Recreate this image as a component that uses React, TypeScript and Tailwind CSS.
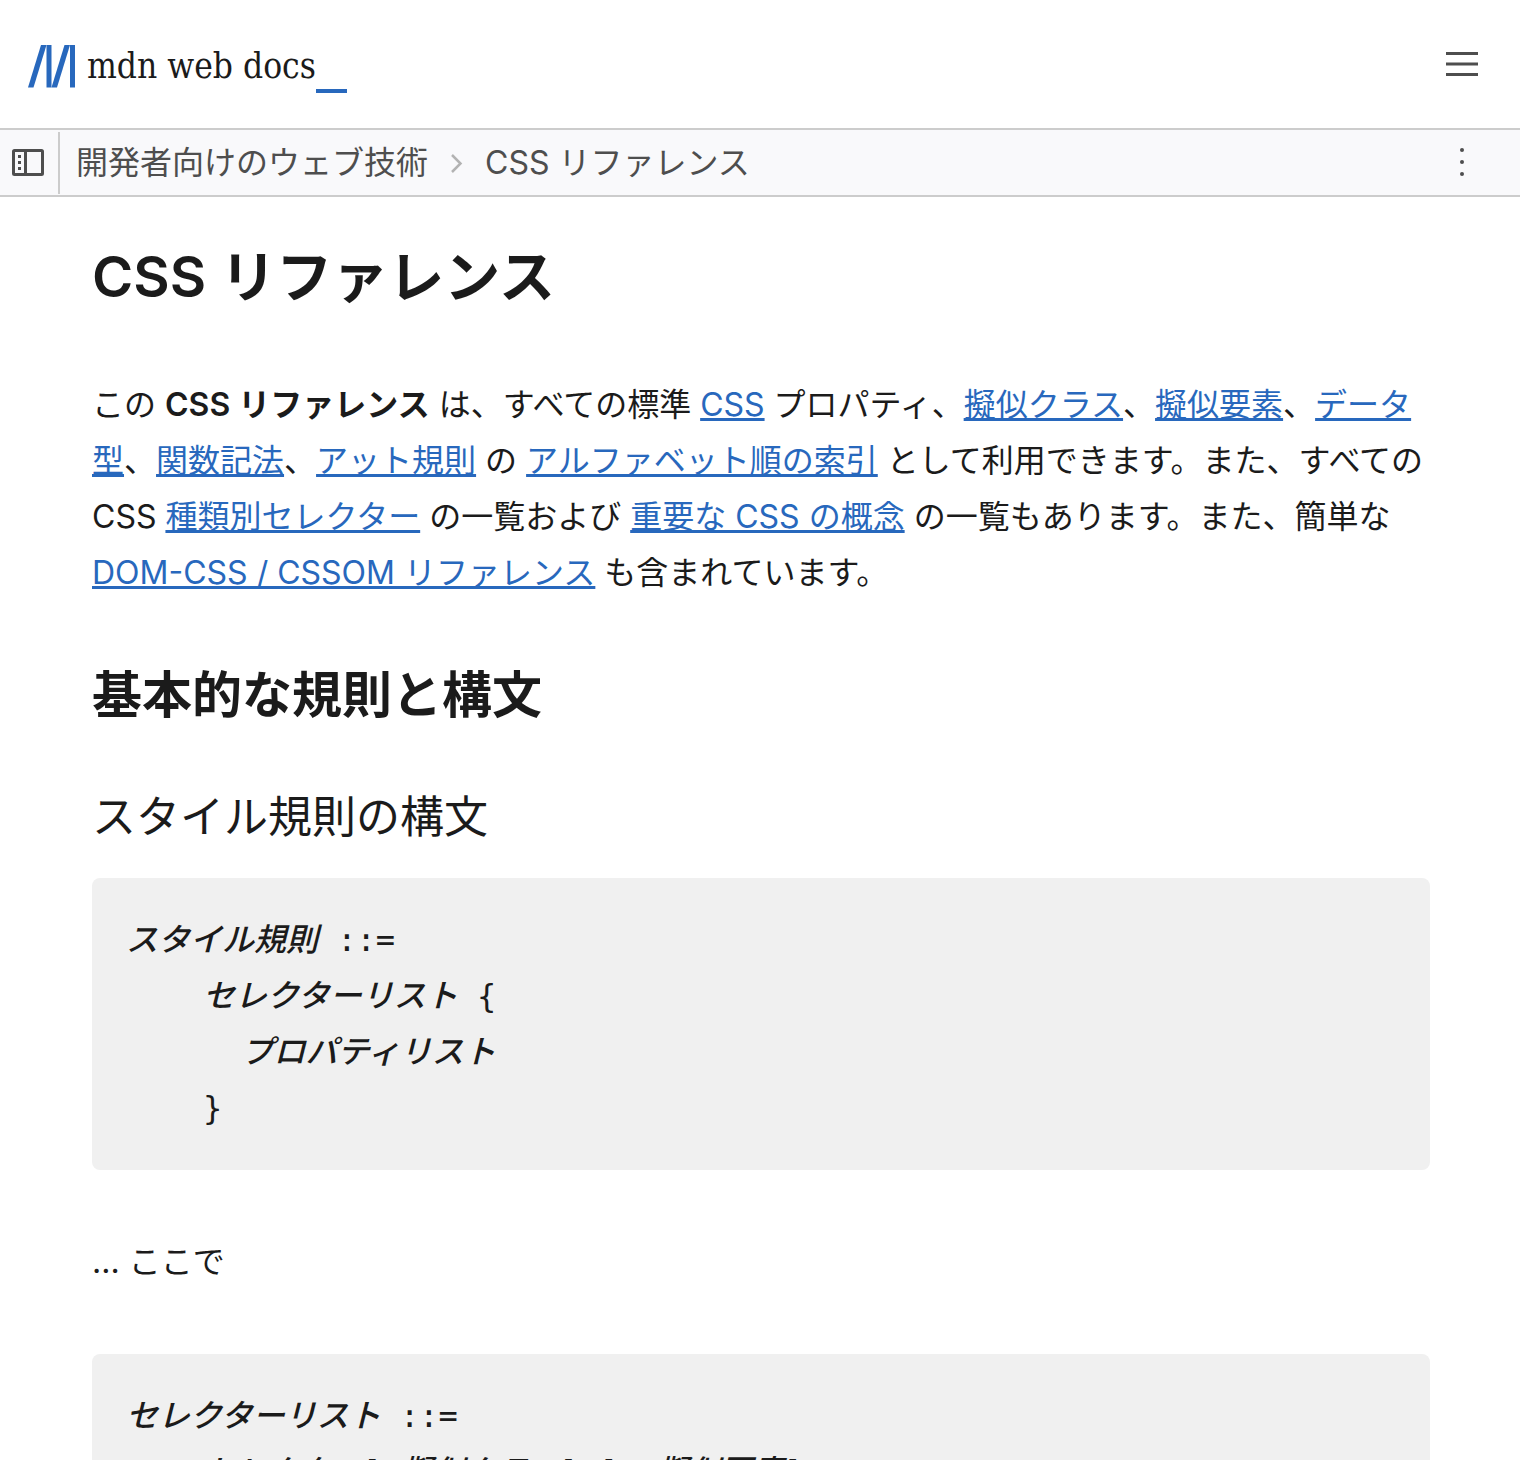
import type { ReactNode } from "react";

const TextLink = ({ children }: { children: ReactNode }) => (
  <a href="#" className="text-[#2868bd] underline decoration-[3px] underline-offset-2 [text-decoration-skip-ink:none]">
    {children}
  </a>
);

const CodeBlock = ({ children }: { children: ReactNode }) => (
  <pre className="overflow-hidden rounded-lg bg-[#f0f0f0] p-[34px] font-['DejaVu_Sans_Mono','Noto_Sans_CJK_JP',monospace] text-[32px] font-medium leading-[56px]">
    <code className="font-['DejaVu_Sans_Mono','Noto_Sans_CJK_JP',monospace]">{children}</code>
  </pre>
);

const Logo = () => (
  <a href="#" aria-label="MDN" className="flex items-center pt-1">
    <svg width="47" height="43" viewBox="0 0 47 43" fill="#2868bd" aria-hidden="true">
      <path d="M13 0h5.5L5.5 42.5H0z" />
      <path d="M18.5 0h5v42.5h-5z" />
      <path d="M36.5 0H42L29 42.5h-5.5z" />
      <path d="M42 0h5v42.5h-5z" />
    </svg>
    <span className="ml-3 font-['DejaVu_Serif_Condensed','DejaVu_Serif',serif] text-[35px] leading-10">mdn web docs</span>
    <span className="mt-[50px] h-1 w-[31px] bg-[#2868bd]" />
  </a>
);

const Header = () => (
  <header className="flex h-[130px] items-center justify-between border-b-2 border-[#cccccc] pl-7 pr-[42px]">
    <Logo />
    <button type="button" aria-label="メニュー" className="text-[#4e4e4e]">
      <svg width="32" height="24" viewBox="0 0 32 24" fill="currentColor" aria-hidden="true">
        <path d="M0 0h32v3H0zM0 10.5h32v3H0zM0 21h32v3H0z" />
      </svg>
    </button>
  </header>
);

const Breadcrumbs = () => (
  <div className="flex h-[67px] items-center border-b-2 border-[#cccccc] bg-[#f9f9fb] text-[#4e4e4e]">
    <button type="button" aria-label="サイドバー" className="flex h-[62px] w-[60px] items-center border-r-2 border-[#cccccc] pl-3">
      <svg width="32" height="27" viewBox="0 0 32 27" fill="none" aria-hidden="true">
        <rect x="1.5" y="1.5" width="29" height="24" rx="1" stroke="currentColor" strokeWidth="3" />
        <path d="M13.5 1v25" stroke="currentColor" strokeWidth="3" />
        <path d="M6 6h3v3H6zM6 12h3v3H6zM6 18h3v3H6z" fill="currentColor" />
      </svg>
    </button>
    <nav className="flex flex-1 items-center pl-4 text-[32px] leading-[56px]">
      <a href="#">開発者向けのウェブ技術</a>
      <svg className="mx-[22px]" width="13" height="20" viewBox="0 0 13 20" fill="none" aria-hidden="true">
        <path d="M2 2l8.5 8.5L2 19" stroke="#b3b3b3" strokeWidth="2.5" />
      </svg>
      <a href="#">CSS リファレンス</a>
    </nav>
    <button type="button" aria-label="その他" className="mr-14 pb-0.5">
      <svg width="4" height="28" viewBox="0 0 4 28" fill="currentColor" aria-hidden="true">
        <circle cx="2" cy="2" r="2" />
        <circle cx="2" cy="14" r="2" />
        <circle cx="2" cy="26" r="2" />
      </svg>
    </button>
  </div>
);

const App = () => {
  return (
    <div
      lang="ja"
      className="h-screen overflow-hidden bg-white font-['Inter','Noto_Sans_CJK_JP',sans-serif] text-[#1b1b1b]"
    >
      <Header />
      <Breadcrumbs />
      <main className="pl-[92px] pr-[90px] pt-11 text-[32px] leading-[56px]">
        <h1 className="text-[56px] font-semibold leading-[72px]">CSS リファレンス</h1>
        <p className="mt-16">
          この <strong className="font-semibold">CSS リファレンス</strong> は、すべての標準 <TextLink>CSS</TextLink>{" "}
          プロパティ、<TextLink>擬似クラス</TextLink>、<TextLink>擬似要素</TextLink>、<TextLink>データ型</TextLink>、
          <TextLink>関数記法</TextLink>、<TextLink>アット規則</TextLink> の{" "}
          <TextLink>アルファベット順の索引</TextLink> として利用できます。また、すべての CSS{" "}
          <TextLink>種類別セレクター</TextLink> の一覧および <TextLink>重要な CSS の概念</TextLink>{" "}
          の一覧もあります。また、簡単な <TextLink>DOM-CSS / CSSOM リファレンス</TextLink> も含まれています。
        </p>
        <h2 className="mt-16 text-[50px] font-semibold leading-[60px]">基本的な規則と構文</h2>
        <h3 className="mb-[33px] mt-16 text-[44px] leading-[56px]">スタイル規則の構文</h3>
        <CodeBlock>
          <em>スタイル規則</em> ::={"\n    "}
          <em>セレクターリスト</em> {"{"}
          {"\n      "}
          <em>プロパティリスト</em>
          {"\n    }"}
        </CodeBlock>
        <p className="my-16">... ここで</p>
        <CodeBlock>
          <em>セレクターリスト</em> ::={"\n    "}
          <em>セレクター</em>[:<em>擬似クラス</em>] [::<em>擬似要素</em>]{"\n    [, "}
          <em>セレクターリスト</em>]
        </CodeBlock>
      </main>
    </div>
  );
};

export default App;
